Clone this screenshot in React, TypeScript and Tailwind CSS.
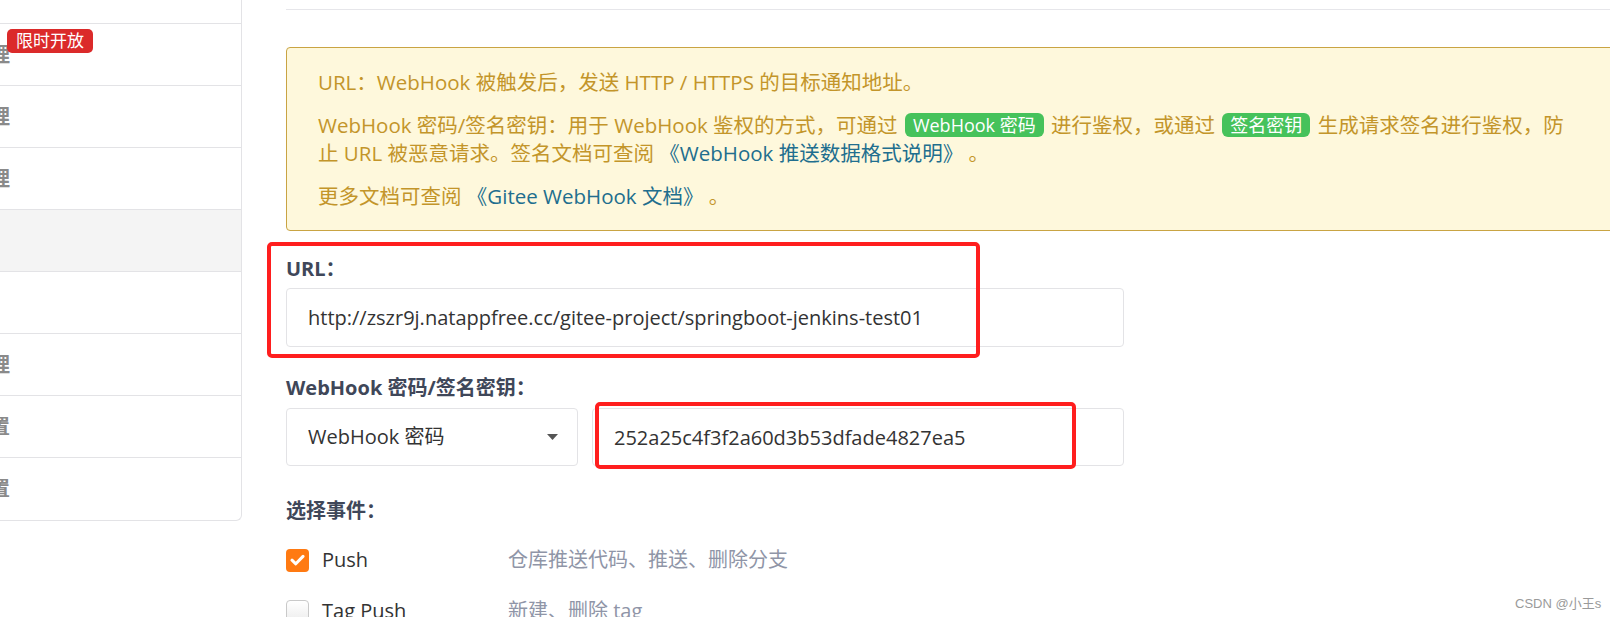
import React from 'react';

interface MenuRow {
  label: string;
  badge?: string;
  active?: boolean;
}

const menuRows: MenuRow[] = [
  { label: '基本信息' },
  { label: '仓库镜像管理', badge: '限时开放' },
  { label: '部署公钥管理' },
  { label: '仓库成员管理' },
  { label: 'WebHooks', active: true },
  { label: '仓库挂件' },
  { label: '推送规则管理' },
  { label: '保护分支设置' },
  { label: '只读文件设置' },
];

const Badge: React.FC<{ children: React.ReactNode }> = ({ children }) => (
  <span className="inline-block mx-[2px] px-[8px] rounded-[6px] bg-[#46c25b] text-white text-[18px] leading-[24px] align-[1px]">
    {children}
  </span>
);

const DocLink: React.FC<{ children: React.ReactNode }> = ({ children }) => (
  <a className="text-[#216e8e]">{children}</a>
);

const Checkbox: React.FC<{ checked?: boolean }> = ({ checked }) =>
  checked ? (
    <span className="w-[23px] h-[23px] rounded-[4px] bg-[#ff7a12] flex items-center justify-center shrink-0">
      <svg width="15" height="12" viewBox="0 0 15 12" fill="none">
        <path d="M2 6.2 L5.8 9.8 L13 2.4" stroke="white" strokeWidth="3" strokeLinecap="round" strokeLinejoin="round" />
      </svg>
    </span>
  ) : (
    <span className="w-[23px] h-[23px] rounded-[4px] border border-[#c9c9c9] bg-gradient-to-b from-white to-[#ececec] shrink-0" />
  );

const EventRow: React.FC<{ checked?: boolean; name: string; desc: string }> = ({ checked, name, desc }) => (
  <div className="flex items-center h-[28px]">
    <Checkbox checked={checked} />
    <span className="ml-[13px] w-[186px] text-[#333]">{name}</span>
    <span className="text-[#8f95a7]">{desc}</span>
  </div>
);

export default function App() {
  return (
    <div className="relative w-[1610px] h-[617px] overflow-hidden bg-white flex items-start font-['Open_Sans','Noto_Sans_CJK_SC',sans-serif]">
      {/* settings menu, scrolled so only its right edge shows */}
      <div className="-ml-[110px] -mt-[38px] w-[352px] shrink-0 border-r border-b border-[#e3e3e6] rounded-br-[6px] overflow-hidden">
        {menuRows.map((row, i) => (
          <div
            key={row.label}
            className={`relative h-[62px] flex items-center text-[20px] font-semibold text-[#8a8a8a] ${
              i < menuRows.length - 1 ? 'border-b border-[#e3e3e6]' : ''
            } ${row.active ? 'bg-[#f4f4f4]' : ''}`}
          >
            <span className="whitespace-nowrap">{row.label}</span>
            {row.badge && (
              <span className="absolute left-[117px] top-[5px] px-[9px] rounded-[5px] bg-[#db2a2a] text-white text-[17px] font-normal leading-[24px]">
                {row.badge}
              </span>
            )}
          </div>
        ))}
      </div>

      <div className="ml-[44px] w-[1330px] shrink-0 text-[20px]">
        <div className="h-[10px] border-b border-[#e6e6ea]" />

        <div className="mt-[37px] border border-[#c9a443] rounded-[4px] bg-[#fef8dc] pl-[31px] py-[20px] text-[20.5px] leading-[28px] text-[#c3952a] space-y-[15px]">
          <p className="whitespace-nowrap">URL：WebHook 被触发后，发送 HTTP / HTTPS 的目标通知地址。</p>
          <p className="whitespace-nowrap">
            WebHook 密码/签名密钥：用于 WebHook 鉴权的方式，可通过 <Badge>WebHook 密码</Badge> 进行鉴权，或通过{' '}
            <Badge>签名密钥</Badge> 生成请求签名进行鉴权，防
            <br />
            止 URL 被恶意请求。签名文档可查阅 <DocLink>《WebHook 推送数据格式说明》</DocLink> 。
          </p>
          <p className="whitespace-nowrap">
            更多文档可查阅 <DocLink>《Gitee WebHook 文档》</DocLink> 。
          </p>
        </div>

        <label className="block mt-[24px] leading-[28px] font-bold text-[#3f4759]">URL：</label>
        <input
          readOnly
          defaultValue="http://zszr9j.natappfree.cc/gitee-project/springboot-jenkins-test01"
          className="block mt-[5px] w-[838px] h-[59px] border border-[#e3e3e6] rounded-[4px] pl-[21px] text-[#333] outline-none"
        />

        <label className="block mt-[27px] leading-[28px] font-bold text-[#3f4759]">WebHook 密码/签名密钥：</label>
        <div className="mt-[6px] flex gap-[14px]">
          <div className="w-[292px] h-[58px] border border-[#e3e3e6] rounded-[4px] pl-[21px] pr-[19px] flex items-center justify-between text-[#333]">
            <span>WebHook 密码</span>
            <svg width="11" height="6" viewBox="0 0 11 6">
              <path d="M0 0 H11 L5.5 6 Z" fill="#555" />
            </svg>
          </div>
          <input
            readOnly
            defaultValue="252a25c4f3f2a60d3b53dfade4827ea5"
            className="w-[532px] h-[58px] border border-[#e3e3e6] rounded-[4px] pl-[21px] text-[#333] outline-none"
          />
        </div>

        <label className="block mt-[31px] leading-[28px] font-bold text-[#3f4759]">选择事件：</label>
        <div className="mt-[21px]">
          <EventRow checked name="Push" desc="仓库推送代码、推送、删除分支" />
        </div>
        <div className="mt-[23px]">
          <EventRow name="Tag Push" desc="新建、删除 tag" />
        </div>
      </div>

      {/* red annotation frames drawn over the form */}
      <div className="absolute left-[267px] top-[242px] w-[713px] h-[116px] border-[4px] border-[#ff1e1e] rounded-[5px]" />
      <div className="absolute left-[595px] top-[402px] w-[481px] h-[67px] border-[4px] border-[#ff1e1e] rounded-[5px]" />

      <div className="absolute left-[1515px] top-[594px] text-[13px] font-['Liberation_Sans','Noto_Sans_CJK_SC',sans-serif] text-[#9a9a9a]">
        CSDN @小王s
      </div>
    </div>
  );
}
